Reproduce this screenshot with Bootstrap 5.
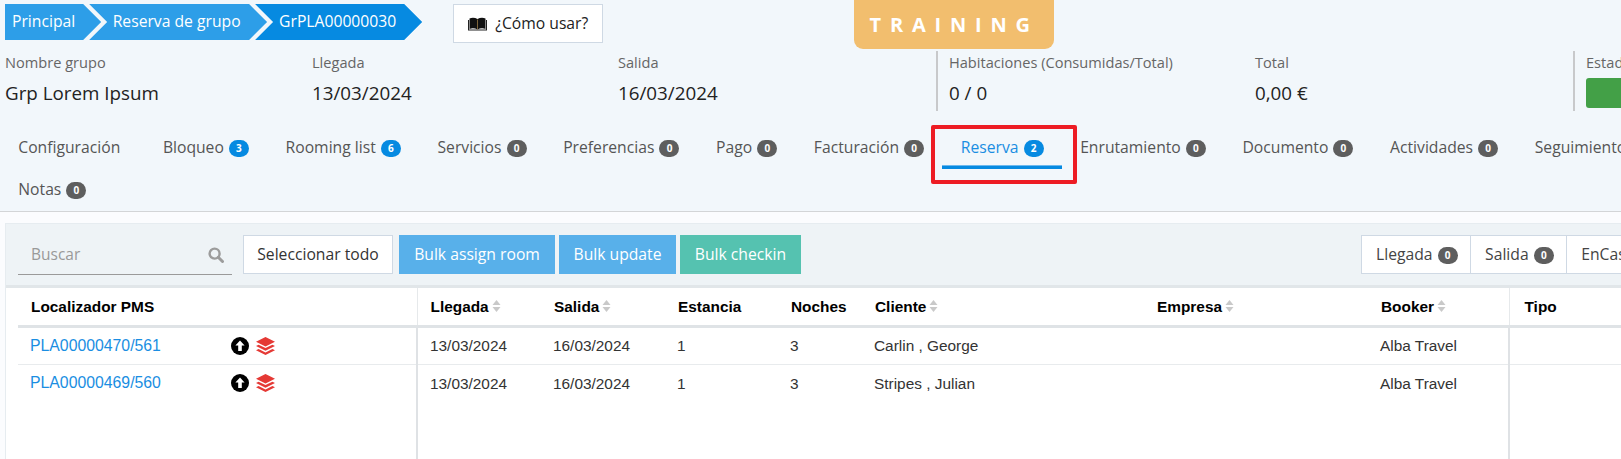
<!DOCTYPE html>
<html lang="es"><head><meta charset="utf-8"><title>Reserva de grupo</title>
<link href="https://cdn.jsdelivr.net/npm/bootstrap@5.3.0/dist/css/bootstrap.min.css" rel="stylesheet">
<style>
html,body{height:100%;overflow:hidden}
body{background:#f2f7fb;font-family:"Open Sans",sans-serif;font-size:14px;color:#555;width:1621px}
.sheet{width:1900px}
.top-row{height:49px}
.crumbs{padding:4px 0 0 5px}
.crumb-item{height:36px;line-height:35px;color:#fff;font-size:15.7px;background:#2d9ee8;padding:0 26.5px 0 23.5px;clip-path:polygon(0 0,calc(100% - 18px) 0,100% 50%,calc(100% - 18px) 100%,0 100%,18px 50%);margin-left:-12px;white-space:nowrap}
.crumb-item:first-child{margin-left:0;padding:0 26px 0 7px;clip-path:polygon(0 0,calc(100% - 18px) 0,100% 50%,calc(100% - 18px) 100%,0 100%)}
.crumb-item.current{background:#068ae1;padding:0 26px 0 24px}
.how-btn{margin:4px 0 0 31px;width:150px;height:39px;background:#fff;border:1px solid #cfd9e4;border-radius:0;color:#222;font-size:15.7px;padding:0;display:flex;align-items:center;justify-content:center;gap:8px}
.env-flag{margin-left:251px;width:200px;height:49px;background:#f2be6e;color:#fff;border-radius:0 0 9px 9px;font-weight:700;font-size:20px;letter-spacing:8.8px;line-height:50px;text-align:center;flex:none}
.info-row{margin-top:2px;height:60px}
.info-cell{flex:none}
.info-cell.ruled{border-left:2px solid #c8c9cb;padding-left:11px}
.info-label{font-size:14.6px;line-height:20px;color:#666;padding-top:1px}
.info-value{font-size:18.8px;line-height:24px;color:#222;margin-top:9px}
.w-a{width:307px;margin-left:5px}.w-b{width:306px}.w-c{width:318px}.w-d{width:319px}.w-e{width:318px}.w-f{width:200px}
.state-pill{width:90px;height:30px;background:#43a047;border-radius:3px;margin-top:6px}
.tab-strip{width:1700px;padding-top:19px;height:101px;border-bottom:1px solid #d3d5d7}
.tab-item{height:42px;padding:0 18.3px;line-height:34px;color:#555;font-size:15.7px;white-space:nowrap;position:relative;text-decoration:none;display:block}
.tab-item.plain{margin-right:6px}
.tab-item.on{color:#1a8ee2}
.tab-item.on::after{content:"";position:absolute;left:0;right:0;top:35px;height:4px;background:#068ae1;border-top:1px solid #6bb8ee}
.red-box{position:absolute;left:931px;top:125px;width:146px;height:59px;border:4px solid #ed1c24;border-radius:2px}
.count{display:inline-block;width:20px;height:17px;line-height:17px;padding:0;border-radius:9px;font-size:10px;font-weight:700;text-align:center;color:#fff;vertical-align:1px;background:#5e5e5e;margin-left:1px}
.count.blue{background:#068ae1}
.lower{background:#fbfcfe;height:247px;padding:11px 0 0 5px}
.panel{border:1px solid #e6ecf0;border-right:0;border-bottom:0;background:#fff;height:100%}
.tool-bar{height:64px;background:#eef3f6;border-bottom:3px solid #e1e6e9;padding:11px 0 0 12px}
.search-box{width:214px;height:40px;border-bottom:1px solid #9a9a9a;padding-left:13px;line-height:37px;color:#999;font-size:15.5px;margin-right:11px}
.tool-btn{height:39px;border-radius:0;font-size:15.7px;padding:0;color:#fff;border:0;margin-right:4px;white-space:nowrap}
.tool-btn.white{background:#fff;border:1px solid #cfd9e4;color:#333;width:150px;margin-right:6px}
.tool-btn.sky{background:#58b0ea}
.tool-btn.teal{background:#55c2b0}
.bw-assign{width:156px}.bw-update{width:117px}.bw-check{width:121px}
.side-group{position:absolute;left:1361px;top:235px;height:39px;background:#fff;border:1px solid #cfd9e4}
.side-item{padding:0 12.5px 0 14px;line-height:37px;font-size:15.7px;color:#444;border-right:1px solid #cfd9e4;white-space:nowrap}
.grid-table{table-layout:fixed;width:1880px;margin:0 0 0 12px;font-family:"Liberation Sans",sans-serif;font-size:15.4px;--bs-table-bg:transparent}
.c-a{width:399px}.c-b{width:124px}.c-c{width:124px}.c-d{width:113px}.c-e{width:84px}.c-f{width:282px}.c-g{width:224px}.c-h{width:141px}
.grid-table th{height:38px;padding:0 0 0 13px;vertical-align:middle;border-bottom:3px solid #dfe3e6;color:#000;font-weight:700;font-size:15.4px;white-space:nowrap}
.grid-table th.far{padding-left:15px}
.grid-table td{height:38px;padding:0 0 0 12px;vertical-align:middle;border-bottom:1px solid #e8ebed;color:#333}
.grid-table tbody tr:nth-child(2) td{border-bottom:0}
.grid-table tr:last-child td{border-bottom:0;height:100px}
.grid-table a{color:#1a8ee2;text-decoration:none;width:201px;display:inline-block;font-size:15.8px}
.grid-table .edge{border-right:2px solid #dfe2e5}
.grid-table th.edge{border-right:1px solid #e6e9eb}
.sort-mark{display:inline-block;margin-left:3px;vertical-align:0}
.act-icons{display:flex;gap:7px;align-items:center}
</style></head>
<body>
<div class="sheet">
  <div class="top-row d-flex align-items-start">
    <div class="crumbs d-flex">
      <div class="crumb-item">Principal</div>
      <div class="crumb-item">Reserva de grupo</div>
      <div class="crumb-item current">GrPLA00000030</div>
    </div>
    <button class="btn how-btn" type="button">
      <svg width="19" height="14" viewBox="0 0 19 14" aria-hidden="true"><path d="M1.5 1.5C4 .3 7 .5 9.5 2 12 .5 15 .3 17.5 1.5V12C15 11 12 11.2 9.5 12.5 7 11.2 4 11 1.5 12Z" fill="#111"/><path d="M0 3v10.5h19V3h-1v9.5H1V3Z" fill="#222"/><path d="M9.2 2.5h.6v10h-.6Z" fill="#c9a05a"/></svg>
      <span>¿Cómo usar?</span>
    </button>
    <div class="env-flag">TRAINING</div>
  </div>
  <div class="info-row d-flex">
    <div class="info-cell w-a"><div class="info-label">Nombre grupo</div><div class="info-value">Grp Lorem Ipsum</div></div>
    <div class="info-cell w-b"><div class="info-label">Llegada</div><div class="info-value">13/03/2024</div></div>
    <div class="info-cell w-c"><div class="info-label">Salida</div><div class="info-value">16/03/2024</div></div>
    <div class="info-cell ruled w-d"><div class="info-label">Habitaciones (Consumidas/Total)</div><div class="info-value">0 / 0</div></div>
    <div class="info-cell w-e"><div class="info-label">Total</div><div class="info-value">0,00 €</div></div>
    <div class="info-cell ruled w-f"><div class="info-label">Estado</div><div class="state-pill"></div></div>
  </div>
  <nav class="tab-strip d-flex flex-wrap align-content-start">
    <a class="tab-item plain" href="#">Configuración</a>
    <a class="tab-item" href="#">Bloqueo <span class="count blue">3</span></a>
    <a class="tab-item" href="#">Rooming list <span class="count blue">6</span></a>
    <a class="tab-item" href="#">Servicios <span class="count">0</span></a>
    <a class="tab-item" href="#">Preferencias <span class="count">0</span></a>
    <a class="tab-item" href="#">Pago <span class="count">0</span></a>
    <a class="tab-item" href="#">Facturación <span class="count">0</span></a>
    <a class="tab-item on" href="#">Reserva <span class="count blue">2</span></a>
    <a class="tab-item" href="#">Enrutamiento <span class="count">0</span></a>
    <a class="tab-item" href="#">Documento <span class="count">0</span></a>
    <a class="tab-item" href="#">Actividades <span class="count">0</span></a>
    <a class="tab-item" href="#">Seguimiento <span class="count">0</span></a>
    <a class="tab-item" href="#">Notas <span class="count">0</span></a>
  </nav>
  <div class="red-box"></div>
  <div class="lower">
    <div class="panel">
      <div class="tool-bar d-flex align-items-start">
        <div class="search-box d-flex justify-content-between align-items-center">
          <span>Buscar</span>
          <svg class="me-2" width="16" height="16" viewBox="0 0 16 16" aria-hidden="true"><circle cx="6.6" cy="6.6" r="5" fill="none" stroke="#9c9c9c" stroke-width="2.4"/><path d="M10.3 10.3l4.2 4.2" stroke="#9c9c9c" stroke-width="3" stroke-linecap="round"/></svg>
        </div>
        <button class="btn tool-btn white" type="button">Seleccionar todo</button>
        <button class="btn tool-btn sky bw-assign" type="button">Bulk assign room</button>
        <button class="btn tool-btn sky bw-update" type="button">Bulk update</button>
        <button class="btn tool-btn teal bw-check" type="button">Bulk checkin</button>
      </div>
      <table class="table grid-table">
        <colgroup><col class="c-a"><col class="c-b"><col class="c-c"><col class="c-d"><col class="c-e"><col class="c-f"><col class="c-g"><col class="c-h"><col></colgroup>
        <thead><tr>
          <th class="edge">Localizador PMS</th>
          <th>Llegada<svg class="sort-mark" width="9" height="12" viewBox="0 0 9 12"><path d="M4.5 0 8.5 5H.5Z" fill="#c9c9c9"/><path d="M4.5 12 8.5 7H.5Z" fill="#c9c9c9"/></svg></th>
          <th>Salida<svg class="sort-mark" width="9" height="12" viewBox="0 0 9 12"><path d="M4.5 0 8.5 5H.5Z" fill="#c9c9c9"/><path d="M4.5 12 8.5 7H.5Z" fill="#c9c9c9"/></svg></th>
          <th>Estancia</th>
          <th>Noches</th>
          <th>Cliente<svg class="sort-mark" width="9" height="12" viewBox="0 0 9 12"><path d="M4.5 0 8.5 5H.5Z" fill="#c9c9c9"/><path d="M4.5 12 8.5 7H.5Z" fill="#c9c9c9"/></svg></th>
          <th>Empresa<svg class="sort-mark" width="9" height="12" viewBox="0 0 9 12"><path d="M4.5 0 8.5 5H.5Z" fill="#c9c9c9"/><path d="M4.5 12 8.5 7H.5Z" fill="#c9c9c9"/></svg></th>
          <th class="edge">Booker<svg class="sort-mark" width="9" height="12" viewBox="0 0 9 12"><path d="M4.5 0 8.5 5H.5Z" fill="#c9c9c9"/><path d="M4.5 12 8.5 7H.5Z" fill="#c9c9c9"/></svg></th>
          <th class="far">Tipo</th>
        </tr></thead>
        <tbody>
          <tr>
            <td class="edge"><div class="d-flex align-items-center"><a href="#">PLA00000470/561</a><div class="act-icons"><svg width="18" height="18" viewBox="0 0 18 18"><circle cx="9" cy="9" r="9" fill="#000"/><path d="M9 3.6 13.6 8.6H10.8V14H7.2V8.6H4.4Z" fill="#fff"/></svg><svg width="19" height="18" viewBox="0 0 19 18"><path d="M9.5 0 19 4.7 9.5 9.4 0 4.7Z" fill="#e53935"/><path d="M2.6 7.7 9.5 11.1 16.4 7.7 19 9 9.5 13.7 0 9Z" fill="#e53935"/><path d="M2.6 12 9.5 15.4 16.4 12 19 13.3 9.5 18 0 13.3Z" fill="#e53935"/></svg></div></div></td>
            <td>13/03/2024</td><td>16/03/2024</td><td>1</td><td>3</td><td>Carlin , George</td><td></td><td class="edge">Alba Travel</td><td></td>
          </tr>
          <tr>
            <td class="edge"><div class="d-flex align-items-center"><a href="#">PLA00000469/560</a><div class="act-icons"><svg width="18" height="18" viewBox="0 0 18 18"><circle cx="9" cy="9" r="9" fill="#000"/><path d="M9 3.6 13.6 8.6H10.8V14H7.2V8.6H4.4Z" fill="#fff"/></svg><svg width="19" height="18" viewBox="0 0 19 18"><path d="M9.5 0 19 4.7 9.5 9.4 0 4.7Z" fill="#e53935"/><path d="M2.6 7.7 9.5 11.1 16.4 7.7 19 9 9.5 13.7 0 9Z" fill="#e53935"/><path d="M2.6 12 9.5 15.4 16.4 12 19 13.3 9.5 18 0 13.3Z" fill="#e53935"/></svg></div></div></td>
            <td>13/03/2024</td><td>16/03/2024</td><td>1</td><td>3</td><td>Stripes , Julian</td><td></td><td class="edge">Alba Travel</td><td></td>
          </tr>
          <tr><td class="edge"></td><td colspan="6"></td><td class="edge"></td><td></td></tr>
        </tbody>
      </table>
    </div>
  </div>
  <div class="side-group d-flex">
    <div class="side-item">Llegada <span class="count">0</span></div>
    <div class="side-item">Salida <span class="count">0</span></div>
    <div class="side-item">EnCasa <span class="count">0</span></div>
  </div>
</div>
<script src="https://cdn.jsdelivr.net/npm/bootstrap@5.3.0/dist/js/bootstrap.bundle.min.js"></script>
</body></html>
